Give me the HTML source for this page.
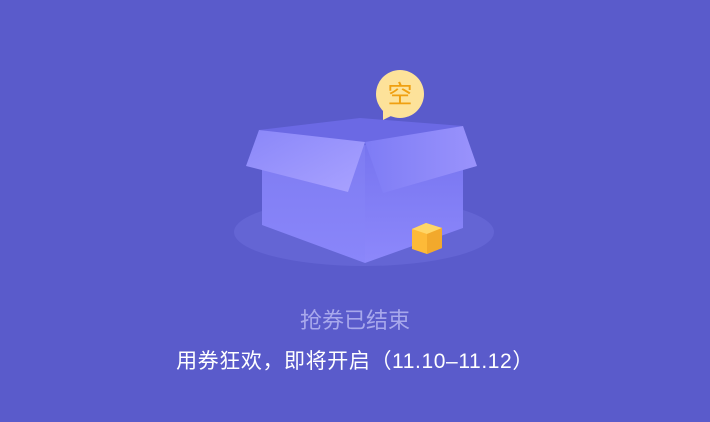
<!DOCTYPE html>
<html><head><meta charset="utf-8"><style>
html,body{margin:0;padding:0;}
body{width:710px;height:422px;background:#5a5bcb;position:relative;overflow:hidden;font-family:"Liberation Sans","Noto Sans CJK SC",sans-serif;}
svg{position:absolute;left:0;top:0;}
.t1{position:absolute;left:0;width:710px;top:306px;text-align:center;font-size:22px;color:#a8a8ec;line-height:30px;}
.t2{position:absolute;left:0;width:710px;top:347px;text-align:center;font-size:21px;color:#fff;line-height:30px;letter-spacing:0.6px;}
</style></head><body>
<svg width="710" height="422" viewBox="0 0 710 422">
<defs>
<linearGradient id="lf" x1="0" y1="0" x2="1" y2="1"><stop offset="0" stop-color="#8a87f9"/><stop offset="1" stop-color="#a9a2ff"/></linearGradient>
<linearGradient id="rf" x1="0" y1="0" x2="1" y2="0"><stop offset="0" stop-color="#7e7cf5"/><stop offset="1" stop-color="#9a93fc"/></linearGradient>
<linearGradient id="fl" x1="0" y1="0" x2="0" y2="1"><stop offset="0" stop-color="#7e7cf2"/><stop offset="1" stop-color="#8a86fa"/></linearGradient>
<linearGradient id="fr" x1="0" y1="0" x2="0" y2="1"><stop offset="0" stop-color="#7472ee"/><stop offset="1" stop-color="#8d88fb"/></linearGradient>
</defs>
<ellipse cx="364" cy="232" rx="130" ry="34" fill="#6465d4"/>
<polygon points="259,130 360,118 463,126 365,145" fill="#6b69e4"/>
<polygon points="262,165 365,145 365,263 262,225" fill="url(#fl)"/>
<polygon points="365,145 463,128 463,228 365,263" fill="url(#fr)"/>
<polygon points="259,130 365,142 348,192 246,166" fill="url(#lf)"/>
<polygon points="365,142 463,126 477,166 383,193" fill="url(#rf)"/>
<polygon points="412,229 426,223 442,228 442,248 427,254 412,249" fill="#fdba38"/>
<polygon points="412,229 426,223 442,228 427,234" fill="#ffd668"/>
<polygon points="427,234 442,228 442,248 427,254" fill="#f2a92c"/>
<circle cx="400" cy="94" r="24" fill="#fde29a"/>
<polygon points="383,105 393,115 383,120" fill="#fde29a"/>
<text x="400" y="103" text-anchor="middle" font-size="25" fill="#f0a010" font-family="Noto Sans CJK SC,sans-serif">空</text>
</svg>
<div class="t1">抢券已结束</div>
<div class="t2">用券狂欢，即将开启（11.10–11.12）</div>
</body></html>
